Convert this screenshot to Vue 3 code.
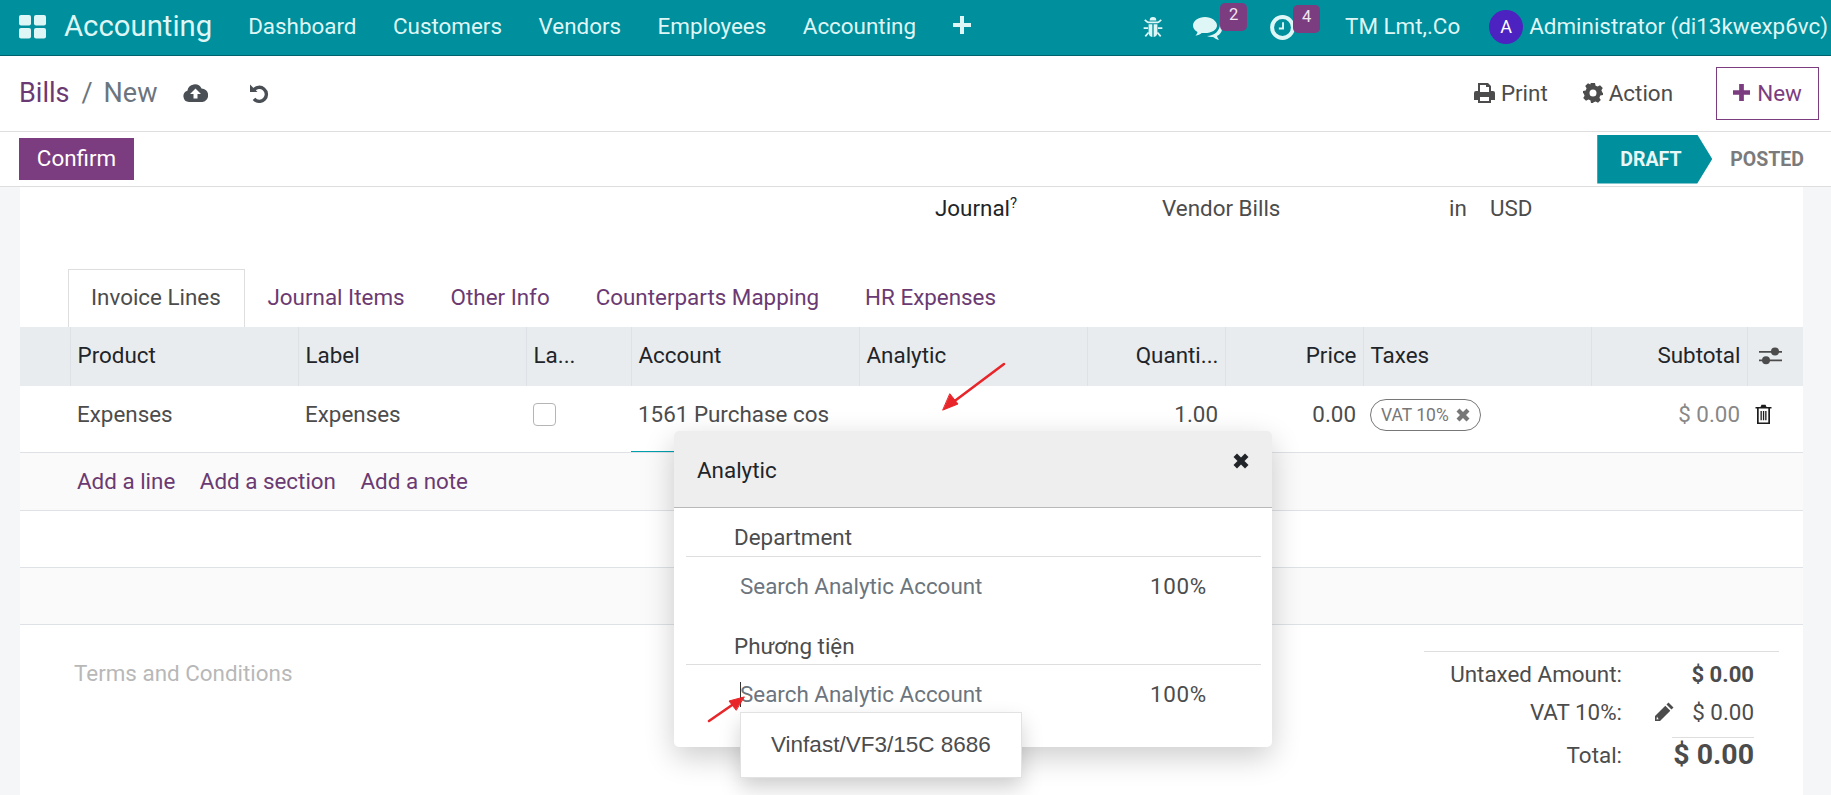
<script setup>
const navItems = ['Dashboard', 'Customers', 'Vendors', 'Employees', 'Accounting']
const tabs = ['Journal Items', 'Other Info', 'Counterparts Mapping', 'HR Expenses']
const columns = [
  { label: '', cls: '' },
  { label: 'Product', cls: '' },
  { label: 'Label', cls: '' },
  { label: 'La...', cls: '' },
  { label: 'Account', cls: '' },
  { label: 'Analytic', cls: '' },
  { label: 'Quanti...', cls: 'right' },
  { label: 'Price', cls: 'right' },
  { label: 'Taxes', cls: '' },
  { label: 'Subtotal', cls: 'right' }
]
</script>

<template>
  <div class="page">
    <header class="nav">
      <svg class="apps" viewBox="0 0 27 24"><rect x="0" y="0" width="12" height="10.5" rx="2"/><rect x="15" y="0" width="12" height="10.5" rx="2"/><rect x="0" y="13" width="12" height="10.5" rx="2"/><rect x="15" y="13" width="12" height="10.5" rx="2"/></svg>
      <span class="brand">Accounting</span>
      <nav class="nav-items">
        <a v-for="item in navItems" :key="item">{{ item }}</a>
        <svg class="nav-plus" viewBox="0 0 18 18"><path d="M7 0h4v7h7v4h-7v7H7v-7H0V7h7z"/></svg>
      </nav>
      <div class="nav-right">
        <svg class="bug" viewBox="0 0 20 20"><path d="M7 4a3 3 0 0 1 6 0zM5.500 5h9v1.600h-9zM6 7.500h3.400V19C7 18.700 6 17 6 15zM10.600 7.500H14V15c0 2-1 3.700-3.400 4z"/><path d="M5.500 6 2.500 3.500M14.500 6l3-2.500M5.500 11H1.500M14.500 11h4M6 15l-3 3.500M14 15l3 3.500" fill="none" stroke="currentColor" stroke-width="1.600"/></svg>
        <span class="badged chat">
          <svg viewBox="0 0 30 23"><path d="M24 19c3-1.500 5-4 5-7 0-2-.8-3.500-2-5 0 7-6 12-13 12 2 1 4 1.300 6 1 1.500 1 3.500 2.500 6 3-.8-1.200-1.700-2.700-2-4z"/><path d="M12 0C5.400 0 0 3.800 0 8.500c0 2.700 1.800 5 4.500 6.600-.2 1.300-1 2.600-2 3.600 2.500-.4 4.600-1.600 6.200-2.800 1.100.2 2.200.2 3.300.2 6.600 0 12-3.200 12-7.600S18.600 0 12 0z"/></svg>
          <b class="badge">2</b>
        </span>
        <span class="badged clock">
          <svg viewBox="0 0 24 24"><circle cx="12" cy="12" r="10" fill="none" stroke="currentColor" stroke-width="3.800"/><path d="M13.400 7v6.800H8.500v-1.800h3.100V7z"/></svg>
          <b class="badge">4</b>
        </span>
        <span class="company">TM Lmt,.Co</span>
        <span class="avatar">A</span>
        <span class="user">Administrator (di13kwexp6vc)</span>
      </div>
    </header>

    <section class="panel-top">
      <div class="crumbs">
        <a class="crumb-link">Bills</a>
        <span class="crumb-sep">/</span>
        <span class="crumb-cur">New</span>
        <svg class="cloud" viewBox="0 0 25 19"><path d="M6 19a5.800 5.800 0 0 1-1.600-11.300A7.500 7.500 0 0 1 18.500 5.500 6.800 6.800 0 0 1 19.500 19z"/><path d="M12.500 5.500 18 11h-3.500v4.500h-4V11H7z" fill="#fff"/></svg>
        <svg class="undo" viewBox="0 0 20 20"><path d="M4.600 7.400A7 7 0 1 1 5 15.800" fill="none" stroke="currentColor" stroke-width="3.400"/><path d="M1 1.500 8.500 9H1z"/></svg>
      </div>
      <div class="actions">
        <span class="action print">
          <svg viewBox="0 0 21 20"><path d="M4 8V0h10l3 3v5h2a2 2 0 0 1 2 2v7h-4v3H4v-3H0v-7a2 2 0 0 1 2-2zm2-6v7h9V4h-3V2zM6 14v4h9v-4z" fill-rule="evenodd"/></svg>
          Print
        </span>
        <span class="action act">
          <svg viewBox="0 0 20 20"><path d="M8 0h4l.6 2.700 2.100.9L17 2.200 19.800 5l-1.400 2.300.9 2.100L20 10v0l0 2-2.700.6-.9 2.100 1.400 2.300-2.800 2.800-2.300-1.400-2.100.9L10 20H8l-.6-2.700-2.100-.9L3 17.800.2 15l1.400-2.300-.9-2.100L0 10V8l2.700-.6.9-2.100L2.200 3 5 .2l2.300 1.400 .1-.9zM10 6.500a3.500 3.500 0 1 0 0 7 3.500 3.500 0 0 0 0-7z" fill-rule="evenodd"/></svg>
          Action
        </span>
        <button class="new-btn">
          <svg viewBox="0 0 18 18"><path d="M6.500 0h5v6.500H18v5h-6.500V18h-5v-6.500H0v-5h6.500z"/></svg>
          New
        </button>
      </div>
    </section>

    <section class="panel-status">
      <button class="confirm">Confirm</button>
      <div class="status">
        <span class="draft">DRAFT</span>
        <span class="posted">POSTED</span>
      </div>
    </section>

    <main class="content">
      <div class="sheet">
        <div class="journal">
          <span class="j-label">Journal<sup>?</sup></span>
          <span class="j-value">Vendor Bills</span>
          <span class="j-in">in</span>
          <span>USD</span>
        </div>

        <div class="tabs">
          <a class="tab active">Invoice Lines</a>
          <a v-for="t in tabs" :key="t" class="tab">{{ t }}</a>
        </div>

        <div class="grid head">
          <div v-for="(c, i) in columns" :key="i" class="th" :class="c.cls">{{ c.label }}</div>
          <div class="th opt">
            <svg viewBox="0 0 23 18"><path d="M0 4h23v1.700H0zM0 12.500h23v1.700H0z"/><circle cx="16" cy="4.600" r="4"/><circle cx="7" cy="13.300" r="4"/></svg>
          </div>
        </div>

        <div class="grid row">
          <div class="td"></div>
          <div class="td">Expenses</div>
          <div class="td">Expenses</div>
          <div class="td"><span class="check"></span></div>
          <div class="td acct">1561 Purchase cos</div>
          <div class="td"></div>
          <div class="td right">1.00</div>
          <div class="td right">0.00</div>
          <div class="td">
            <span class="pill">VAT 10%
              <svg viewBox="0 0 14 14"><path d="M3.500.5 7 4l3.500-3.500 3 3L10 7l3.500 3.500-3 3L7 10l-3.500 3.500-3-3L4 7 .5 3.500z"/></svg>
            </span>
          </div>
          <div class="td right money">$ 0.00</div>
          <div class="td trash">
            <svg viewBox="0 0 17 20"><path d="M5.500 3 6.500.8h4L11.500 3H16.500v1.600H15V20H2V4.600H.5V3zM3.700 4.600v13.800h9.600V4.600zM5.500 7h1.300v9.300H5.500zM7.900 7h1.300v9.300H7.900zM10.200 7h1.300v9.300h-1.300z" fill-rule="evenodd"/></svg>
          </div>
        </div>

        <div class="add-row">
          <a>Add a line</a><a>Add a section</a><a>Add a note</a>
        </div>
        <div class="blank"></div>
        <div class="blank tint"></div>

        <div class="foot">
          <div class="terms">Terms and Conditions</div>
          <div class="totals">
            <div class="tot-row r1"><span>Untaxed Amount:</span><b>$ 0.00</b></div>
            <div class="tot-row r2">
              <span>VAT 10%:</span>
              <span class="tax-val">
                <svg viewBox="0 0 20 20"><path d="M14.500.5 19.500 5.500 17.500 7.500 12.500 2.500zM11.300 3.700l5 5L6 19H1v-5zM3 14.500 2.500 17.500 5.500 17 4.200 16.800z"/></svg>
                $ 0.00
              </span>
            </div>
            <div class="tot-row r3"><span>Total:</span><b>$ 0.00</b></div>
          </div>
        </div>
      </div>
    </main>

    <aside class="pop">
      <div class="pop-head">
        <span>Analytic</span>
        <svg viewBox="0 0 16 16"><path d="M4 .5 8 4.500l4-4 3.500 3.500-4 4 4 4-3.500 3.500-4-4-4 4L.5 12l4-4-4-4z"/></svg>
      </div>
      <div class="pop-body">
        <div class="group-title">Department</div>
        <div class="group-row"><span class="ph">Search Analytic Account</span><span class="pct">100%</span></div>
        <div class="group-title second">Phương tiện</div>
        <div class="group-row"><span class="ph focus">Search Analytic Account</span><span class="pct">100%</span></div>
      </div>
      <div class="drop">Vinfast/VF3/15C 8686</div>
    </aside>

    <svg class="marks" viewBox="0 0 1831 795">
      <g fill="#e8262a" stroke="#e8262a" stroke-width="2.600" stroke-linecap="round">
        <path d="M1004 364 952 403" fill="none"/>
        <path d="M943 410 958 404 950 394z" stroke-width="1"/>
        <path d="M709 721 735 703" fill="none"/>
        <path d="M744 697 729 701 736 710z" stroke-width="1"/>
      </g>
    </svg>
  </div>
</template>

<style>
html, body { margin: 0; background: #fff; }
</style>

<style scoped>
.page {
  position: relative;
  width: 1831px;
  height: 795px;
  overflow: hidden;
  display: flex;
  flex-direction: column;
  font-family: Roboto, "Noto Sans", sans-serif;
  font-size: 22.4px;
  color: #4c4c4c;
  background: #fff;
}
svg { display: block; fill: currentColor; }

.nav {
  flex: none;
  height: 55px;
  border-bottom: 1px solid #00626d;
  background: #008f9c;
  color: #dff6f6;
  display: flex;
  align-items: center;
  padding-left: 19px;
  box-sizing: content-box;
}
.apps { width: 27px; height: 24px; margin-top: -2px; }
.brand { font-size: 29.3px; margin-left: 18px; margin-right: 36px; margin-top: -4px; }
.nav-items { display: flex; align-items: center; gap: 36.500px; margin-top: -4px; }
.nav-plus { width: 18px; height: 18px; margin-top: -1px; }
.nav-right { margin-left: auto; display: flex; align-items: center; padding-right: 3px; margin-top: -2px; }
.bug { width: 22px; height: 22px; margin-right: 29px; }
.badged { position: relative; display: block; }
.chat svg { width: 30px; height: 23px; }
.chat { margin-right: 47px; margin-top: 4px; }
.clock svg { width: 25px; height: 25px; }
.clock { margin-right: 50px; margin-top: 1px; }
.badge {
  position: absolute;
  top: -12px;
  right: -24px;
  width: 27px;
  height: 28px;
  border-radius: 5px;
  background: #7c3d80;
  color: #f2e6f2;
  font-size: 16.500px;
  font-weight: 400;
  text-align: center;
  line-height: 23px;
}
.chat .badge { top: -14px; }
.clock .badge { top: -10px; right: -25px; }
.company { margin-right: 29px; margin-top: -1px; }
.user { margin-top: -1px; }
.avatar {
  width: 34px;
  height: 34px;
  border-radius: 50%;
  background: #4c22c0;
  color: #fff;
  font-size: 18px;
  text-align: center;
  line-height: 34px;
  margin-right: 6px;
}

.panel-top {
  flex: none;
  height: 75px;
  border-bottom: 1px solid #dedede;
  display: flex;
  align-items: center;
  justify-content: space-between;
  padding: 0 12px 0 19px;
}
.crumbs { display: flex; align-items: center; font-size: 27px; margin-top: -2px; }
.crumb-link { color: #6b3a72; }
.crumb-sep { color: #6c757d; margin: 0 11px 0 12px; }
.crumb-cur { color: #6c757d; }
.cloud { width: 25px; height: 19px; margin-left: 26px; color: #4a4f55; }
.undo { width: 20px; height: 20px; margin-left: 41px; color: #4a4f55; }
.actions { display: flex; align-items: center; }
.action { display: flex; align-items: center; gap: 6px; color: #4c4c4c; margin-top: -2px; }
.print svg { width: 21px; height: 20px; }
.act svg { width: 20px; height: 20px; }
.print { margin-right: 35px; }
.act { margin-right: 43px; }
.new-btn {
  width: 103px;
  height: 53px;
  box-sizing: border-box;
  border: 1px solid #7c3d80;
  background: #fff;
  color: #7c3d80;
  font: inherit;
  display: flex;
  align-items: center;
  justify-content: center;
  gap: 7px;
  padding: 0 0 2px;
}
.new-btn svg { width: 17px; height: 17px; }

.panel-status {
  flex: none;
  height: 54px;
  border-bottom: 1px solid #dedede;
  display: flex;
  align-items: center;
  justify-content: space-between;
  padding-left: 19px;
}
.confirm {
  width: 115px;
  height: 42px;
  border: 0;
  padding: 0 0 2px;
  background: #7c3d80;
  color: #fff;
  font: inherit;
}
.status { display: flex; align-items: center; margin-right: 27px; font-weight: 700; font-size: 19.5px; }
.draft {
  width: 115px;
  height: 49px;
  box-sizing: border-box;
  padding-left: 23px;
  line-height: 49px;
  background: #008f9c;
  color: #e8f7f8;
  clip-path: polygon(0 0, 100px 0, 115px 50%, 100px 100%, 0 100%);
}
.posted { margin-left: 18px; color: #7b7b7b; }

.content {
  flex: 1;
  min-height: 0;
  background: #f5f6f8;
  padding: 0 28px 0 20px;
}
.sheet { background: #fff; height: 100%; }

.journal {
  height: 82px;
  box-sizing: border-box;
  padding: 0 0 0 915px;
  display: flex;
  align-items: flex-start;
  line-height: 42px;
}
.j-label { width: 227px; color: #212529; }
.j-label sup { font-size: 15px; line-height: 0; }
.j-value { width: 287px; }
.j-in { width: 41px; }

.tabs { height: 58px; padding-left: 48px; display: flex; }
.tab {
  padding: 0 23px;
  line-height: 56px;
  color: #6b3a72;
  white-space: nowrap;
}
.tab:nth-child(2) { padding-left: 22.500px; }
.tab.active {
  box-sizing: border-box;
  width: 177px;
  padding: 0 22px;
  line-height: 54px;
  border: 1px solid #dedede;
  border-bottom: 0;
  color: #4c4c4c;
  background: #fff;
}

.grid {
  display: grid;
  grid-template-columns: 50px 228px 228px 105px 228px 228px 138px 138px 228px 156px 56px;
}
.head { height: 59px; background: #e9ecef; color: #212529; line-height: 57px; }
.th { padding: 0 7px 0 6.500px; border-left: 1px solid #dee2e6; white-space: nowrap; overflow: hidden; min-width: 0; }
.th:first-child { border-left: 0; }
.right { text-align: right; }
.th.right { padding-right: 6.500px; }
.opt { display: flex; align-items: center; padding: 0 0 0 11px; }
.opt svg { width: 23px; height: 18px; color: #4c4c4c; margin-top: -1px; }

.row { height: 66px; border-bottom: 1px solid #dee2e6; line-height: 56px; }
.td { padding: 0 7px; white-space: nowrap; overflow: hidden; min-width: 0; }
.td.acct { overflow: visible; position: relative; }
.td.acct::after {
  content: "";
  position: absolute;
  left: 0;
  bottom: 0;
  width: 100%;
  height: 1px;
  background: #00a0ad;
}
.check {
  display: block;
  width: 23px;
  height: 23px;
  box-sizing: border-box;
  margin-top: 17px;
  border: 1px solid #b5b5b5;
  border-radius: 4px;
}
.pill {
  display: inline-flex;
  align-items: center;
  gap: 7px;
  height: 32px;
  box-sizing: border-box;
  width: 111px;
  padding-left: 10px;
  margin-top: 13px;
  border: 1.500px solid #777;
  border-radius: 16px;
  color: #777;
  font-size: 17.5px;
  line-height: 30px;
  vertical-align: top;
}
.pill svg { width: 14px; height: 14px; }
.money { color: #888; }
.trash { display: flex; padding: 18px 0 0 8px; }
.trash svg { width: 17px; height: 20px; color: #1c1c1c; }

.add-row {
  height: 58px;
  box-sizing: border-box;
  border-bottom: 1px solid #dee2e6;
  background: #fafafa;
  padding-left: 57px;
  display: flex;
  gap: 24.500px;
  line-height: 56px;
  color: #6b3a72;
}
.blank { height: 57px; box-sizing: border-box; border-bottom: 1px solid #dee2e6; }
.blank.tint { background: #fafafa; }

.foot { display: flex; justify-content: space-between; padding: 26px 24px 0 54px; }
.terms { color: #b8b8b8; line-height: 44px; margin-top: 0; }
.totals { width: 355px; border-top: 1px solid #dedede; }
.tot-row { display: grid; grid-template-columns: 198px 132px; justify-items: end; align-items: center; }
.tot-row b { font-weight: 700; font-size: 22.100px; }
.r1 { height: 44px; line-height: 44px; }
.r2 { height: 40px; line-height: 32px; align-items: start; }
.tax-val { display: flex; align-items: center; gap: 18px; }
.tax-val svg { width: 20px; height: 20px; }
.r3 { line-height: 34px; }
.r3 > span { margin-top: 2px; }
.r3 b { font-size: 28.500px; border-top: 1px solid #dedede; width: 82px; text-align: right; white-space: nowrap; }

.pop {
  position: absolute;
  left: 674px;
  top: 431px;
  width: 598px;
  height: 316px;
  background: #fff;
  border-radius: 5px;
  box-shadow: 0 10px 30px rgba(0, 0, 0, 0.2);
  color: #4c4c4c;
}
.pop-head {
  height: 76px;
  box-sizing: content-box;
  border-bottom: 1px solid #b8b8b8;
  background: #eeeeee;
  border-radius: 5px 5px 0 0;
  display: flex;
  justify-content: space-between;
  padding: 0 23px 0 23px;
  line-height: 78px;
  color: #212529;
}
.pop-head svg { width: 16px; height: 16px; margin-top: 22px; }
.pop-body { padding: 0 11px 0 12px; }
.group-title {
  height: 49px;
  box-sizing: border-box;
  padding-left: 48px;
  line-height: 58px;
  border-bottom: 1px solid #dedede;
}
.group-title.second { height: 46px; line-height: 54px; }
.group-row {
  height: 62px;
  display: flex;
  align-items: flex-start;
  padding-left: 54px;
  line-height: 58px;
}
.ph { color: #6c757d; width: 410px; }
.pct { letter-spacing: 0.7px; }
.ph.focus { position: relative; display: block; }
.ph.focus::before {
  content: "";
  position: absolute;
  left: 0;
  top: 17px;
  width: 1px;
  height: 25px;
  background: #333;
}
.drop {
  position: absolute;
  left: 66px;
  top: 281px;
  width: 282px;
  height: 66px;
  box-sizing: border-box;
  border: 1px solid #e2e2e2;
  background: #fff;
  box-shadow: 0 10px 20px rgba(0, 0, 0, 0.18);
  padding-left: 30px;
  line-height: 64px;
  font-family: "Liberation Sans", Arial, sans-serif;
  font-size: 22.500px;
}
.marks { position: absolute; left: 0; top: 0; width: 1831px; height: 795px; pointer-events: none; }
</style>
